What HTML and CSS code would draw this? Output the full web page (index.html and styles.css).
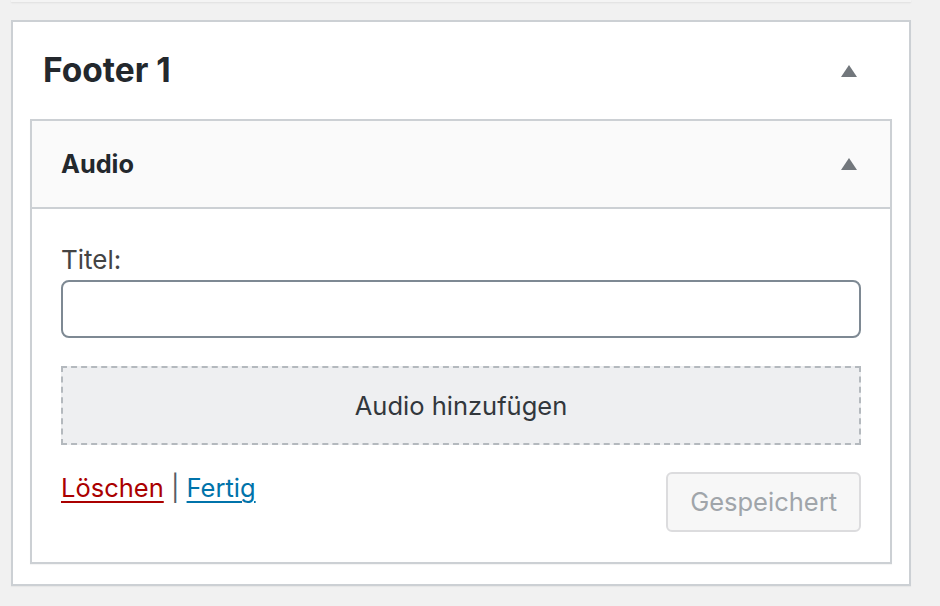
FILE: index.html
```html
<!DOCTYPE html>
<html lang="de">
<head>
<meta charset="utf-8">
<title>Footer 1</title>
<link rel="stylesheet" href="styles.css">
</head>
<body>
<div class="prev-box"></div>
<section class="sidebar">
  <div class="sidebar-name">
    <h2 class="sidebar-title">Footer 1</h2>
    <svg class="toggle" width="16" height="12" viewBox="0 0 16 12" aria-hidden="true"><polygon points="0,12 8,0 16,12"/></svg>
  </div>
  <div class="widget">
    <div class="widget-top">
      <h3 class="widget-title">Audio</h3>
      <svg class="toggle" width="16" height="12" viewBox="0 0 16 12" aria-hidden="true"><polygon points="0,12 8,0 16,12"/></svg>
    </div>
    <div class="widget-inside">
      <label class="field-label" for="title">Titel:</label>
      <input class="field-input" id="title" type="text">
      <button class="add-media" type="button">Audio hinzufügen</button>
      <div class="actions">
        <div class="links"><a class="remove" href="#">Löschen</a> <span class="sep">|</span> <a class="done" href="#">Fertig</a></div>
        <button class="saved" type="button">Gespeichert</button>
      </div>
    </div>
  </div>
</section>
</body>
</html>
```

FILE: styles.css
```css
html, body {
  margin: 0;
  padding: 0;
}
body {
  background: #f1f1f1;
  font-family: Inter, "Noto Sans", "DejaVu Sans", sans-serif;
  width: 940px;
  height: 606px;
  overflow: hidden;
}
.prev-box {
  margin-left: 11px;
  width: 900px;
  height: 2px;
  background: #f4f4f4;
  box-shadow: 0 1px 2px rgba(0, 0, 0, 0.08);
}
.sidebar {
  margin: 18px 0 0 11px;
  width: 896px;
  background: #fff;
  border: 2px solid #ccd0d4;
  box-shadow: 0 1px 1px rgba(0, 0, 0, 0.04);
}
.sidebar-name {
  height: 97px;
  display: flex;
  align-items: center;
  justify-content: space-between;
  padding: 0 52px 0 30px;
}
.sidebar-title {
  margin: 0;
  font-size: 33.5px;
  font-weight: 700;
  line-height: 1;
  color: #23282d;
}
.toggle {
  display: block;
  fill: #72777c;
}
.widget {
  margin: 0 17px 20px 17px;
  border: 2px solid #ccd0d4;
  box-shadow: 0 1px 1px rgba(0, 0, 0, 0.04);
}
.widget-top {
  height: 86px;
  background: #fafafa;
  border-bottom: 2px solid #ccd0d4;
  display: flex;
  align-items: center;
  justify-content: space-between;
  padding: 0 33px 0 29px;
}
.widget-title {
  margin: 0;
  font-size: 25.3px;
  font-weight: 700;
  line-height: 1;
  color: #23282d;
}
.widget-inside {
  padding: 33px 29px 30px 29px;
  display: flex;
  flex-direction: column;
}
.field-label {
  display: block;
  font-size: 26px;
  line-height: 36px;
  color: #444;
}
.field-input {
  margin: 2px 0 0 0;
  box-sizing: border-box;
  width: 800px;
  height: 58px;
  border: 2px solid #7e8993;
  border-radius: 8px;
  background: #fff;
  font: inherit;
  font-size: 26px;
  padding: 0 16px;
}
.add-media {
  margin: 28px 0 0 0;
  box-sizing: border-box;
  width: 800px;
  height: 79px;
  border: 2px dashed #b4b9be;
  background: #eeeff1;
  color: #32373c;
  font-family: inherit;
  font-size: 25.5px;
  line-height: 1;
  padding: 0;
}
.actions {
  margin-top: 25px;
  display: flex;
  justify-content: space-between;
  align-items: flex-start;
}
.links {
  font-size: 25.5px;
  line-height: 36px;
  color: #555d66;
}
.links a {
  text-decoration: underline;
  text-decoration-thickness: 2px;
  text-underline-offset: 4px;
}
.remove {
  color: #a00;
}
.done {
  color: #0073aa;
}
.sep {
  color: #555d66;
}
.saved {
  margin-top: 2px;
  box-sizing: border-box;
  height: 60px;
  padding: 0 22px;
  border: 2px solid #dcdcde;
  border-radius: 6px;
  background: #f7f7f7;
  color: #a0a5aa;
  font-family: inherit;
  font-size: 25.5px;
  line-height: 1;
}
```
